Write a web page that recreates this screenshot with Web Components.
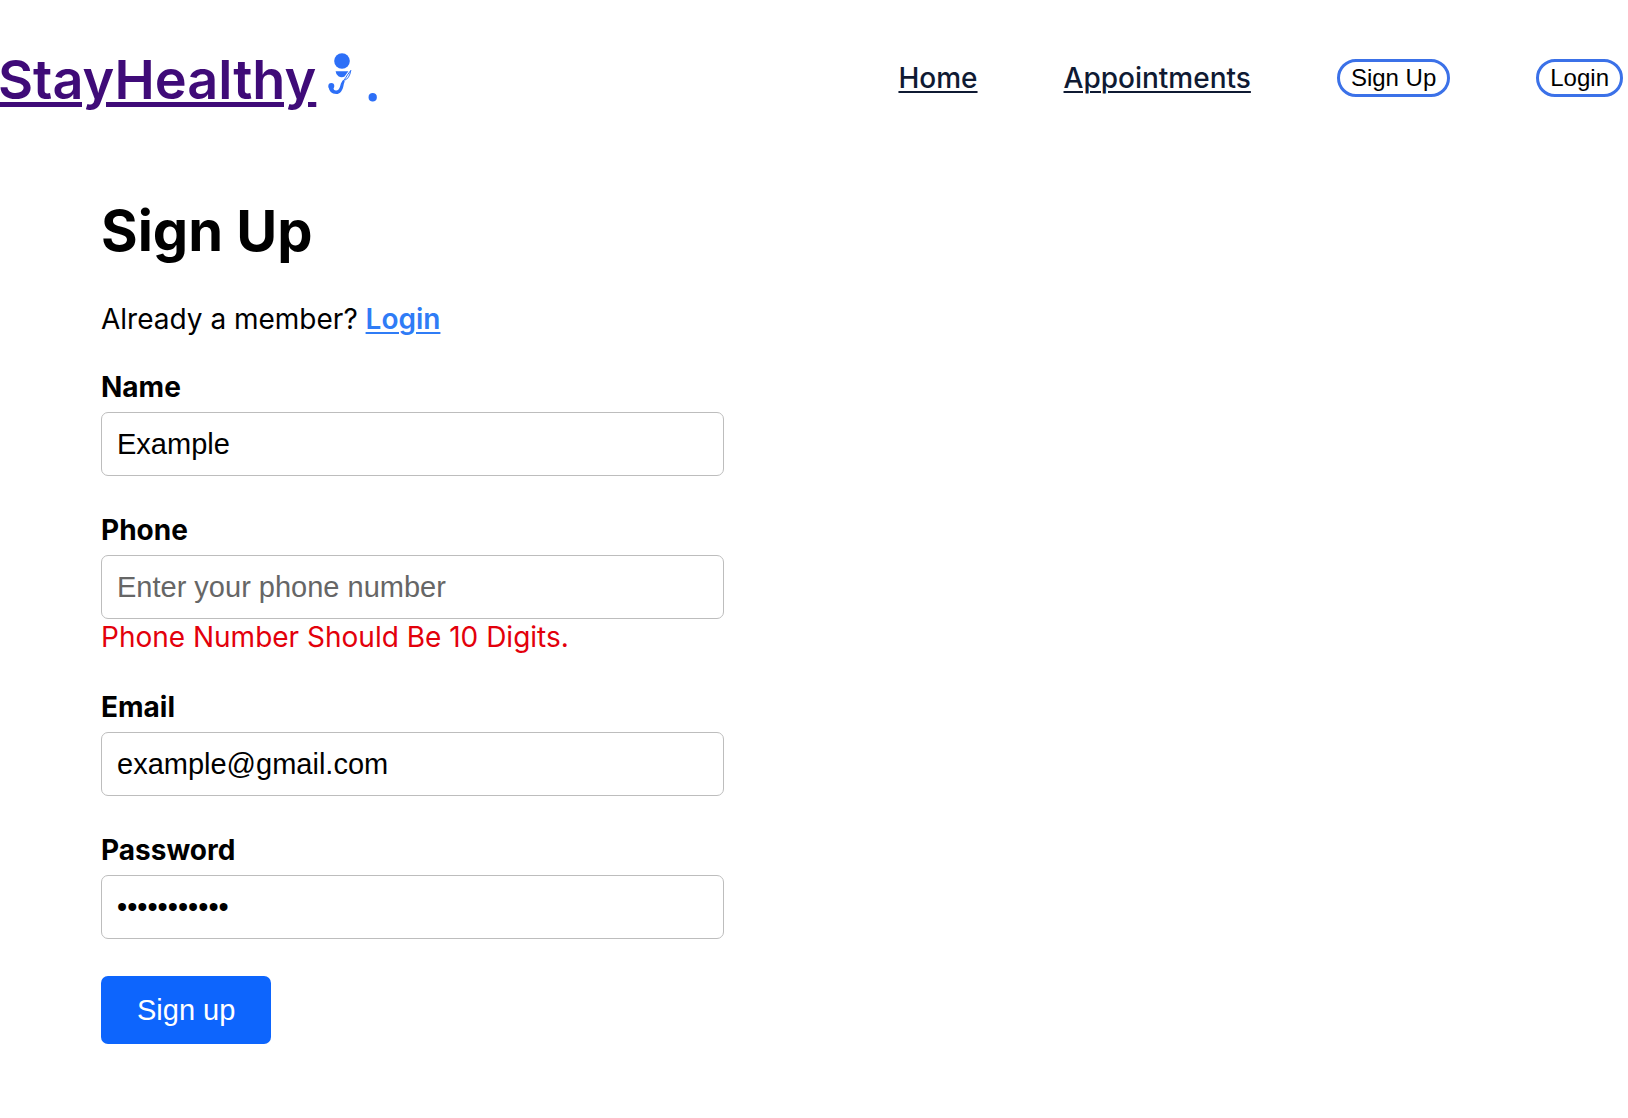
<!DOCTYPE html>
<html lang="en">
<head>
<meta charset="utf-8">
<meta name="viewport" content="width=device-width, initial-scale=1">
<title>StayHealthy - Sign Up</title>
<style>
  body { margin: 0; background: #fff; color: #000; font: 28px/34px Inter, "Liberation Sans", sans-serif; }
</style>
</head>
<body>
<site-header></site-header>
<main><sign-up-form></sign-up-form></main>

<script>
const define = (name, html, setup) => {
  const template = document.createElement('template');
  template.innerHTML = html;
  customElements.define(name, class extends HTMLElement {
    constructor() {
      super();
      this.attachShadow({ mode: 'open' }).append(template.content.cloneNode(true));
    }
    connectedCallback() { if (setup) setup(this, this.shadowRoot); }
  });
};

define('brand-logo', `
  <style>
    :host { display: flex; padding-top: 2px; font-size: 54px; line-height: 70px; font-weight: 600; }
    a { color: #3f0b78; text-decoration-thickness: 5px; text-underline-offset: 3px; margin-left: -2px; }
    svg { width: 28px; height: 44px; margin: 6px 0 0 11px; }
    .dot { color: #2d6ff7; font-family: "Noto Sans", sans-serif; margin-left: 10px; }
  </style>
  <a href="#home">StayHealthy</a>
  <svg viewBox="0 0 28 44" aria-hidden="true">
    <g fill="#2d6ff7">
      <circle cx="15" cy="10" r="7.8"/>
      <path d="M8.6 20.3H21.4L17.6 25.6Q14.2 27 11.4 25.2Q8.9 23.6 8.6 20.3Z"/>
      <circle cx="4.3" cy="35" r="3"/>
      <path d="M1.6 35.5L6.2 36C6.4 38.6 7.4 39.7 9.4 39.5C12.4 39.2 13 35.5 14 32.2L16 29L17.8 30.6C16.8 32 16.8 34 16.2 36C14.8 40.8 12.8 43 9.4 43C4.6 43 1.8 40 1.6 35.5Z"/>
    </g>
    <path d="M15.8 30.6Q19.2 26.4 20.4 24L23.8 19.4M17.4 29.4Q22.5 27.5 23.8 19.4" fill="none" stroke="#2d6ff7" stroke-width="1"/>
  </svg>
  <span class="dot">.</span>
`);

define('nav-link', `
  <style>
    :host { display: block; }
    a { color: #0f1a33; font-weight: 500; text-decoration-thickness: 2px; text-underline-offset: 3px; }
  </style>
  <a href="#"><slot></slot></a>
`);

define('pill-button', `
  <style>
    :host { display: block; }
    button {
      display: block; height: 38px; padding: 0 11px; border: 3px solid #3b71e8; border-radius: 19px;
      background: #fff; color: #000; font: 24px/28px "Liberation Sans", Arial, sans-serif; white-space: nowrap;
    }
  </style>
  <button type="button"><slot></slot></button>
`);

define('site-header', `
  <style>
    :host { display: block; }
    header { display: flex; align-items: flex-start; justify-content: space-between; padding: 43px 5px 0 0; }
    nav { display: flex; align-items: center; gap: 86px; min-height: 70px; }
  </style>
  <header>
    <brand-logo></brand-logo>
    <nav>
      <nav-link>Home</nav-link>
      <nav-link>Appointments</nav-link>
      <pill-button>Sign Up</pill-button>
      <pill-button>Login</pill-button>
    </nav>
  </header>
`);

define('form-field', `
  <style>
    :host { display: block; }
    label { display: block; font-weight: 700; margin-bottom: 8px; }
    input {
      display: block; box-sizing: border-box; width: 100%; height: 64px; padding: 0 15px;
      border: 1px solid #bdbdbd; border-radius: 7px; background: #fff; color: #000;
      font: 29px/34px "Liberation Sans", Arial, sans-serif; outline: none;
    }
    input::placeholder { color: #666; opacity: 1; }
    .error { color: #e3000b; padding-top: 2px; line-height: 32px; }
    .error:empty { display: none; }
  </style>
  <label for="control"></label>
  <input id="control" aria-describedby="error">
  <div class="error" id="error" role="alert"></div>
`, (host, root) => {
  const input = root.querySelector('input');
  root.querySelector('label').textContent = host.getAttribute('label');
  root.querySelector('.error').textContent = host.getAttribute('error') || '';
  for (const name of ['type', 'placeholder', 'value']) {
    if (host.hasAttribute(name)) input.setAttribute(name, host.getAttribute(name));
  }
});

define('sign-up-form', `
  <style>
    :host { display: block; padding: 82px 101px 74px; }
    h1 { margin: 0; font-size: 56px; line-height: 68px; font-weight: 700; }
    p { margin: 37px 0 34px; }
    a { color: #2f7cf6; font-weight: 600; text-decoration-thickness: 2px; text-underline-offset: 3px; }
    form { display: flex; flex-direction: column; gap: 37px; max-width: 623px; }
    button {
      align-self: flex-start; height: 68px; padding: 0 36px; border: 0; border-radius: 7px;
      background: #0d65fd; color: #fff; font: 29px/34px "Liberation Sans", Arial, sans-serif;
    }
  </style>
  <h1>Sign Up</h1>
  <p>Already a member? <a href="#login">Login</a></p>
  <form>
    <form-field label="Name" type="text" value="Example" placeholder="Enter your name"></form-field>
    <form-field label="Phone" type="tel" placeholder="Enter your phone number" error="Phone Number Should Be 10 Digits."></form-field>
    <form-field label="Email" type="email" value="example@gmail.com" placeholder="Enter your email"></form-field>
    <form-field label="Password" type="password" value="example1234" placeholder="Enter your password"></form-field>
    <button type="submit">Sign up</button>
  </form>
`);
</script>
</body>
</html>
